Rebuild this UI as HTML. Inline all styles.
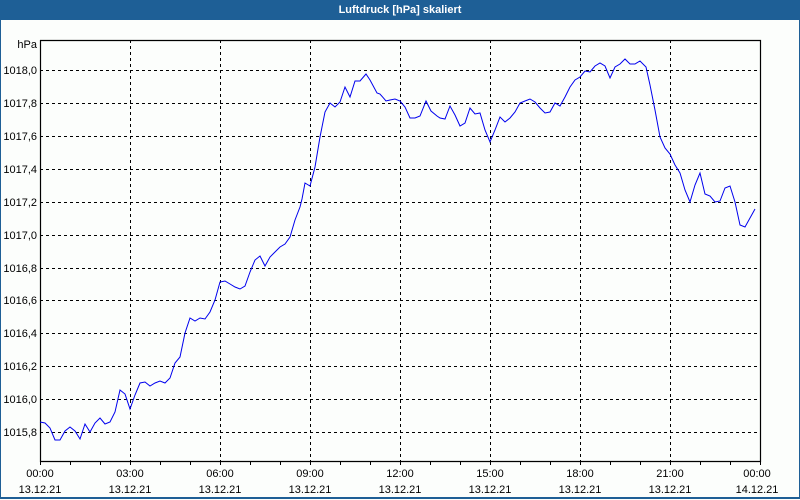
<!DOCTYPE html>
<html><head><meta charset="utf-8"><style>
html,body{margin:0;padding:0;background:#fcfefc;}
body{width:800px;height:500px;position:relative;overflow:hidden;font-family:"Liberation Sans",sans-serif;}
.frame{position:absolute;left:0;top:0;width:798px;height:497px;border-left:1px solid #1e5f96;border-right:1px solid #1e5f96;border-bottom:2px solid #1e5f96;}
.title{position:absolute;left:0;top:0;width:800px;height:20px;background:#1e5f96;color:#fff;font-weight:bold;font-size:11px;line-height:20px;text-align:center;}
</style></head><body>
<div class="frame"></div>
<div class="title">Luftdruck [hPa] skaliert</div>
<svg width="800" height="500" style="position:absolute;left:0;top:0" font-family="Liberation Sans, sans-serif" font-size="11">
<g stroke="#000" stroke-width="1" stroke-dasharray="3,3">
<line x1="130.5" y1="40" x2="130.5" y2="461"/><line x1="220.5" y1="40" x2="220.5" y2="461"/><line x1="310.5" y1="40" x2="310.5" y2="461"/><line x1="400.5" y1="40" x2="400.5" y2="461"/><line x1="490.5" y1="40" x2="490.5" y2="461"/><line x1="580.5" y1="40" x2="580.5" y2="461"/><line x1="670.5" y1="40" x2="670.5" y2="461"/>
<line x1="40" y1="70.5" x2="760" y2="70.5"/><line x1="40" y1="103.5" x2="760" y2="103.5"/><line x1="40" y1="136.5" x2="760" y2="136.5"/><line x1="40" y1="169.5" x2="760" y2="169.5"/><line x1="40" y1="202.5" x2="760" y2="202.5"/><line x1="40" y1="235.5" x2="760" y2="235.5"/><line x1="40" y1="268.5" x2="760" y2="268.5"/><line x1="40" y1="300.5" x2="760" y2="300.5"/><line x1="40" y1="333.5" x2="760" y2="333.5"/><line x1="40" y1="366.5" x2="760" y2="366.5"/><line x1="40" y1="399.5" x2="760" y2="399.5"/><line x1="40" y1="432.5" x2="760" y2="432.5"/>
</g>
<path d="M40.5 40V461.5H760.5V40.5H40" fill="none" stroke="#000" stroke-width="1.2"/>
<g stroke="#000">
<path d="M70.5 461v4M100.5 461v4M130.5 461v4M160.5 461v4M190.5 461v4M220.5 461v4M250.5 461v4M280.5 461v4M310.5 461v4M340.5 461v4M370.5 461v4M400.5 461v4M430.5 461v4M460.5 461v4M490.5 461v4M520.5 461v4M550.5 461v4M580.5 461v4M610.5 461v4M640.5 461v4M670.5 461v4M700.5 461v4M730.5 461v4M760.5 461v4M40.5 461v4"/>
</g>
<polyline fill="none" stroke="#0000ee" stroke-width="1" points="40,422 45,423 50,428 55,440 60,440 65,431 70,427 75,431 80,439 85,424 90,432 95,423 100,418 105,424 110,422 115,412 120,390 125,394 130,409 135,395 140,383 145,382 150,386 155,383 160,381 165,383 170,378 175,363 180,357 185,333 190,318 195,321 200,318 205,319 210,312 215,300 220,282 225,281 230,284 235,287 240,289 245,286 250,272 255,260 260,256 265,266 270,257 275,252 280,247 285,244 290,237 295,220 300,207 302,199 305,183 310,186 315,167 320,137 325,112 330,103 335,107 340,102 345,87 350,97 355,81 360,81 366,74 370,80 377,93 380,94 386,101 390,100 395,99 400,101 405,107 410,118 415,118 420,116 426,101 431,111 437,116 440,118 445,119 450,106 455,115 460,126 465,123 470,108 475,114 480,113 485,130 490,142 495,130 500,117 505,122 510,118 515,112 520,103 525,101 530,99 535,102 540,108 545,113 550,112 555,103 560,106 565,97 570,87 575,80 580,77 585,71 590,72 595,66 600,63 605,66 610,78 615,67 620,64 625,59 630,64 635,64 640,61 646,67 650,85 655,110 660,137 665,148 670,154 675,165 680,173 685,190 690,202 695,185 700,173 705,194 710,196 715,202 720,201 725,188 730,186 735,202 740,225 745,227 750,218 755,209"/>
<g fill="#000" text-anchor="end">
<text x="37" y="48">hPa</text>
<text x="37" y="74">1018,0</text><text x="37" y="107">1017,8</text><text x="37" y="140">1017,6</text><text x="37" y="173">1017,4</text><text x="37" y="206">1017,2</text><text x="37" y="239">1017,0</text><text x="37" y="272">1016,8</text><text x="37" y="304">1016,6</text><text x="37" y="337">1016,4</text><text x="37" y="370">1016,2</text><text x="37" y="403">1016,0</text><text x="37" y="436">1015,8</text>
</g>
<g fill="#000" text-anchor="middle">
<text x="40" y="477">00:00</text><text x="130" y="477">03:00</text><text x="220" y="477">06:00</text><text x="310" y="477">09:00</text><text x="400" y="477">12:00</text><text x="490" y="477">15:00</text><text x="580" y="477">18:00</text><text x="670" y="477">21:00</text><text x="757" y="477">00:00</text>
<text x="40" y="493">13.12.21</text><text x="130" y="493">13.12.21</text><text x="220" y="493">13.12.21</text><text x="310" y="493">13.12.21</text><text x="400" y="493">13.12.21</text><text x="490" y="493">13.12.21</text><text x="580" y="493">13.12.21</text><text x="670" y="493">13.12.21</text><text x="757" y="493">14.12.21</text>
</g>
</svg>
</body></html>
